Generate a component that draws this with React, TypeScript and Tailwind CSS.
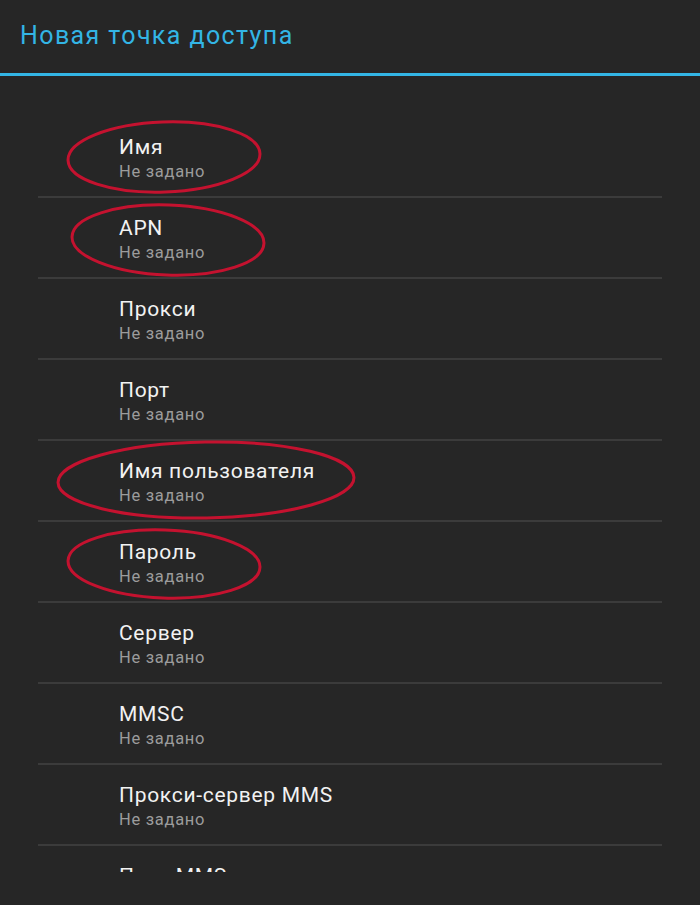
import React from "react"

const fields = [
  "Имя",
  "APN",
  "Прокси",
  "Порт",
  "Имя пользователя",
  "Пароль",
  "Сервер",
  "MMSC",
  "Прокси-сервер MMS",
  "Порт MMS",
]

// red hand-drawn marks over the screenshot
const marks = [
  { cx: 164, cy: 157, rx: 96, ry: 35, rot: -2 },
  { cx: 168, cy: 240, rx: 96, ry: 35, rot: 2 },
  { cx: 206, cy: 480, rx: 148, ry: 38, rot: -1 },
  { cx: 164, cy: 564, rx: 96, ry: 34, rot: 2 },
]

export default function App() {
  return (
    <div
      className="relative w-[700px] h-[905px] overflow-hidden bg-[#262626]"
      style={{ fontFamily: "Roboto, 'Noto Sans', sans-serif" }}
    >
      <header className="h-[73px] flex items-center px-5 pb-[3px]">
        <h1 className="text-[25px] leading-none tracking-[1.4px] text-[#33b5e5]">Новая точка доступа</h1>
      </header>
      <div className="h-[3px] bg-[#33b5e5]" />

      <div className="mt-[41px] h-[755px] overflow-hidden px-[38px]">
        {fields.map((f) => (
          <div key={f} className="h-[81px] border-b-2 border-[#3b3b3b] pt-[18px] pl-[81px]">
            <div className="text-[21px] leading-6 tracking-[0.7px] text-[#f2f2f2]">{f}</div>
            <div className="mt-[3px] text-[16.5px] leading-5 tracking-[0.7px] text-[#9c9c9c]">Не задано</div>
          </div>
        ))}
      </div>

      <svg className="absolute inset-0 pointer-events-none" width="700" height="905">
        {marks.map((m, i) => (
          <ellipse
            key={i}
            cx={m.cx}
            cy={m.cy}
            rx={m.rx}
            ry={m.ry}
            transform={`rotate(${m.rot} ${m.cx} ${m.cy})`}
            fill="none"
            stroke="#c4122f"
            strokeWidth="3"
          />
        ))}
      </svg>
    </div>
  )
}
